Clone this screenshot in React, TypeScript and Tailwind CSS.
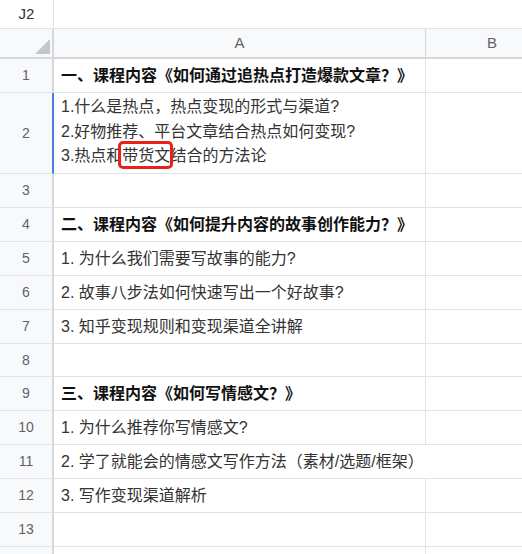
import React from "react";

type Row = {
  n: number;
  h: string;
  lines?: string[];
  bold?: boolean;
  spill?: boolean;
  mark?: boolean;
  hideNum?: boolean;
};

const rows: Row[] = [
  { n: 1, h: "h-[34px]", lines: ["一、课程内容《如何通过追热点打造爆款文章？》"], bold: true },
  { n: 2, h: "h-[81px]", mark: true },
  { n: 3, h: "h-[34px]" },
  { n: 4, h: "h-[34px]", lines: ["二、课程内容《如何提升内容的故事创作能力？》"], bold: true },
  { n: 5, h: "h-[34px]", lines: ["1. 为什么我们需要写故事的能力?"] },
  { n: 6, h: "h-[34px]", lines: ["2. 故事八步法如何快速写出一个好故事?"] },
  { n: 7, h: "h-[34px]", lines: ["3. 知乎变现规则和变现渠道全讲解"] },
  { n: 8, h: "h-[33px]" },
  { n: 9, h: "h-[34px]", lines: ["三、课程内容《如何写情感文？》"], bold: true },
  { n: 10, h: "h-[34px]", lines: ["1. 为什么推荐你写情感文?"] },
  { n: 11, h: "h-[34px]", lines: ["2. 学了就能会的情感文写作方法（素材/选题/框架）"], spill: true },
  { n: 12, h: "h-[34px]", lines: ["3. 写作变现渠道解析"] },
  { n: 13, h: "h-[34px]" },
  { n: 14, h: "h-[34px]", hideNum: true },
];

const font = { fontFamily: '"Liberation Sans", "Noto Sans CJK SC", sans-serif' };

function RowHead({ n, h, active, hide }: { n: number; h: string; active?: boolean; hide?: boolean }) {
  return (
    <div
      className={`${h} w-[54px] shrink-0 flex items-center justify-center bg-[#f8f9fa] border-b border-[#e1e3e6] border-r-2 text-[14px] text-[#5f6368] ${
        active ? "border-r-[#4a7fe0]" : "border-r-[#d5d7da]"
      }`}
    >
      {hide ? null : n}
    </div>
  );
}

function RowTwo() {
  return (
    <div className="flex flex-col pt-[2px] pl-[7px] text-[16px] leading-[24.5px] text-[#333]">
      <div>1.什么是热点，热点变现的形式与渠道?</div>
      <div>2.好物推荐、平台文章结合热点如何变现?</div>
      <div>
        3.热点和
        <span className="relative">
          带货文
          <span className="absolute -left-[4px] -right-[3px] -top-[6px] -bottom-[5px] border-[3px] border-[#e8221b] rounded-[5px]" />
        </span>
        结合的方法论
      </div>
    </div>
  );
}

export default function App() {
  return (
    <div className="w-[522px] h-[554px] overflow-hidden bg-white" style={font}>
      <div className="w-[560px]">
        {/* name box */}
        <div className="h-[29px] flex border-b border-[#e1e3e6]">
          <div className="w-[54px] flex items-center justify-center border-r border-[#e1e3e6] text-[15px] text-[#333]">
            J2
          </div>
          <div className="flex-1" />
        </div>

        {/* column header */}
        <div className="h-[30px] flex bg-[#f8f9fa] border-b-2 border-[#d5d7da]">
          <div className="w-[54px] shrink-0 relative border-r-2 border-[#d5d7da]">
            <svg className="absolute left-[35px] top-[10px]" width="15" height="15" viewBox="0 0 15 15">
              <polygon points="15,0 15,15 0,15" fill="#c4c6c9" />
            </svg>
          </div>
          <div className="w-[372px] shrink-0 flex items-center justify-center border-r border-[#d5d7da] text-[15px] text-[#5f6368]">
            A
          </div>
          <div className="w-[132px] shrink-0 flex items-center justify-center text-[15px] text-[#5f6368]">
            B
          </div>
        </div>

        {rows.map((r) => (
          <div key={r.n} className="flex">
            <RowHead n={r.n} h={r.h} active={r.mark} hide={r.hideNum} />
            {r.spill ? (
              <div className={`${r.h} w-[504px] shrink-0 flex items-center pl-[7px] border-b border-[#e1e3e6] text-[16px] text-[#333] whitespace-nowrap`}>
                {r.lines?.[0]}
              </div>
            ) : (
              <>
                <div
                  className={`${r.h} w-[372px] shrink-0 border-b border-r border-[#e1e3e6] whitespace-nowrap ${
                    r.mark ? "" : "flex items-center pl-[7px] text-[16px]"
                  } ${r.bold ? "font-bold text-[#111]" : "text-[#333]"}`}
                >
                  {r.mark ? <RowTwo /> : r.lines?.[0]}
                </div>
                <div className={`${r.h} w-[132px] shrink-0 border-b border-[#e1e3e6]`} />
              </>
            )}
          </div>
        ))}
      </div>
    </div>
  );
}
